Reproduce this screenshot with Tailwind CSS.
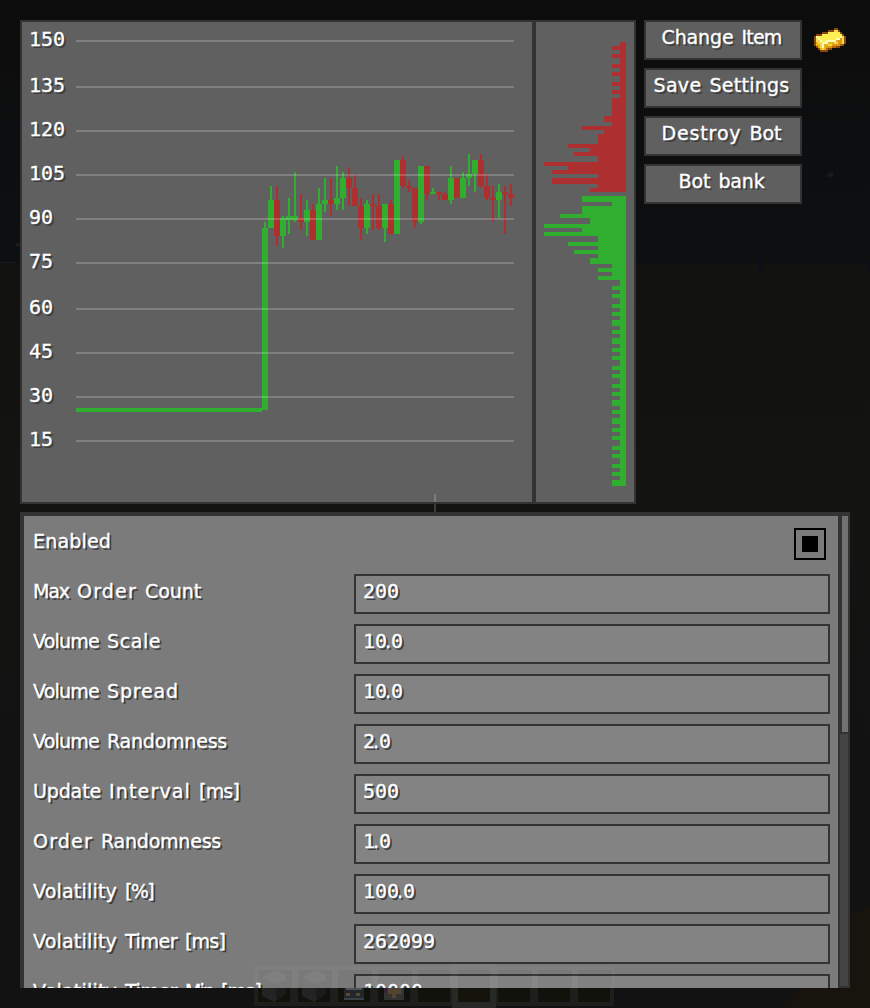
<!DOCTYPE html>
<html lang="en">
<head>
<meta charset="utf-8">
<title>Bot Settings</title>
<script src="https://cdn.jsdelivr.net/npm/@tailwindcss/browser@4"></script>
</head>
<body class="bg-[#111210]">
<div class="relative isolate w-[870px] h-[1008px] overflow-hidden bg-[linear-gradient(#0c0c0c_0px,#0d0e0f_130px,#0e0f11_262px,#121310_266px,#131412_520px,#111211_1008px)] text-white text-[19px] leading-6 font-['DejaVu_Sans',sans-serif] [text-shadow:2px_2px_0_#3e3e3e] [-webkit-text-stroke:0.3px_white]">

  <!-- world and hotbar behind the screen -->
  <svg class="absolute inset-0 -z-10" width="870" height="1008" shape-rendering="crispEdges">
    <path d="M850 914L870 907V1008H780L800 988H850Z" fill="#17130d"/>
    <path d="M828 173h3v-1h2v4h-2v1h-3zM2 262h14v1H2zM16 243h4v3h-4z" fill="#1a1a1c"/>
    <path d="M758 254h6v8h-1v9h-5zM867 260h3v11h-3z" fill="#0e0e17"/>
    <path d="M434 504h2v8h-2z" fill="#3b3b3b"/>
    <g id="hotbar"></g>
  </svg>

  <div class="flex flex-col px-5 pt-5 gap-2">
    <div class="flex gap-2 h-[484px]">
      <!-- price chart and order book -->
      <div class="flex w-[616px] gap-1 bg-[#333] border-2 border-[#333]">
        <div class="relative w-[510px] h-[480px] bg-[#606060]">
          <div id="axis"></div>
          <svg id="price" class="absolute inset-0" width="510" height="480" viewBox="22 22 510 480" shape-rendering="crispEdges"></svg>
        </div>
        <div class="w-[98px] h-[480px] bg-[#606060]">
          <svg id="book" width="98" height="480" viewBox="536 22 98 480" shape-rendering="crispEdges"></svg>
        </div>
      </div>
      <div class="flex flex-col gap-2 w-[158px]">
        <button class="h-10 pb-1.5 pr-[3px] border-2 border-[#333] bg-[#5f5f5f] whitespace-nowrap [text-shadow:2px_2px_0_#3e3e3e]"><span class="mc">Change Item</span></button>
        <button class="h-10 pb-1.5 pr-[3px] border-2 border-[#333] bg-[#5f5f5f] whitespace-nowrap [text-shadow:2px_2px_0_#3e3e3e]"><span class="mc">Save Settings</span></button>
        <button class="h-10 pb-1.5 pr-[3px] border-2 border-[#333] bg-[#5f605f] whitespace-nowrap [text-shadow:2px_2px_0_#3e3e3e]"><span class="mc">Destroy Bot</span></button>
        <button class="h-10 pb-1.5 pr-[3px] border-2 border-[#333] bg-[#5f5f5f] whitespace-nowrap [text-shadow:2px_2px_0_#3e3e3e]"><span class="mc">Bot bank</span></button>
      </div>
      <svg id="ingot" class="mt-2 ml-1" width="32" height="24" viewBox="0 0 16 12" shape-rendering="crispEdges"></svg>
    </div>

    <!-- settings list -->
    <div class="flex w-[830px] h-[476px] bg-[#333] pt-1 pl-1">
      <div class="w-[814px] h-[472px] overflow-hidden bg-[#7b7b7b] pr-2 pl-[9px]">
        <div class="flex justify-between h-[58px] pt-3 pr-1">
          <span class="mc pt-[1px]">Enabled</span>
          <span class="grid place-items-center size-8 border-2 border-black"><span class="size-4 bg-black"></span></span>
        </div>
        <div id="rows" class="flex flex-col gap-[10px]"></div>
      </div>
      <div class="w-3 pl-[2px] pr-[2px] pb-[2px]">
        <div class="h-[470px] bg-[#444]">
          <div class="h-[218px] bg-[#333] pl-[2px] pb-[2px]"><div class="h-[216px] bg-[#727272]"></div></div>
        </div>
      </div>
    </div>
  </div>

  <!-- hotbar showing faintly through the panel -->
  <svg class="absolute left-0 top-0 opacity-[0.03]" width="870" height="988" shape-rendering="crispEdges">
    <path d="M254 966H452V964H496V966H614V988H254Z" fill="#fff"/>
    <path d="M258 970h34v18h-34zM298 970h34v18h-34zM338 970h34v18h-34zM378 970h34v18h-34zM418 970h32v18h-32zM458 970h32v18h-32zM498 970h34v18h-34zM538 970h34v18h-34zM578 970h34v18h-34z" fill="#555"/>
    <path d="M262 978l12-8 12 5v5l-12 4zM302 978l12-8 12 5v5l-12 4z" fill="#fff"/>
  </svg>
  <svg class="absolute left-[434px] top-[494px]" width="2" height="8"><path d="M0 0h2v8h-2z" fill="#7c7c7c"/></svg>
</div>

<script>
const R = '#ae2f2f', G = '#30ae30';
const rect = (x, y, w, h, f) => `<rect x="${x}" y="${y}" width="${w}" height="${h}" fill="${f}"/>`;

// price axis: label and grid line y
const ticks = [[150,40],[135,86],[120,130],[105,174],[90,218],[75,262],[60,308],[45,352],[30,396],[15,440]];
document.getElementById('axis').innerHTML = ticks.map(([v, y]) =>
  `<span class="absolute left-[7px] font-['DejaVu_Sans_Mono',monospace] text-[20px] tracking-[-0.04px]" style="top:${y - 35}px">${v}</span>`).join('');

// candles: colour, body top, body bottom, wick top, wick bottom (thirds of a pixel from y=140)
const candles = [
 ['g',264,810,246,810],['g',180,264,138,264],['r',180,288,138,318],['g',234,288,228,324],['g',228,240,174,282],['g',228,240,96,246],
 ['r',234,246,162,270],['g',210,246,180,288],['r',210,300,192,300],['g',192,300,144,300],['g',180,192,114,216],['r',180,192,114,228],
 ['g',174,192,78,210],['g',114,174,96,210],['r',114,144,84,198],['r',144,198,102,198],['r',198,264,174,300],['g',192,264,180,282],
 ['r',192,198,162,270],['r',198,264,162,270],['g',192,264,192,306],['r',192,282,180,282],['g',60,282,60,282],['r',60,138,48,144],
 ['r',138,144,120,156],['r',144,246,144,264],['g',78,246,78,252],['r',78,162,78,180],['g',156,162,144,162],['r',156,162,156,180],
 ['r',162,180,156,180],['g',114,180,78,192],['r',114,174,114,174],['g',114,174,96,174],['g',102,114,42,138],['g',60,102,60,156],
 ['r',60,138,42,144],['r',138,174,102,180],['r',174,180,138,246],['g',156,180,132,234],['r',156,162,138,282],['r',162,174,132,198]];
let p = rect(76, 408, 186, 4, G);
candles.forEach(([c, bt, bb, wt, wb], i) => {
  const x = 262 + 6 * i, f = c === 'g' ? G : R;
  p += rect(x, 140 + bt / 3, 6, (bb - bt) / 3, f) + rect(x + 2, 140 + wt / 3, 2, (wb - wt) / 3, f);
});
ticks.forEach(([, y]) => p += rect(76, y, 438, 2, 'rgba(255,255,255,0.2)'));
document.getElementById('price').innerHTML = p;

// order book: bar left edge, bottom edge (thirds of a pixel), each bar starts where the previous ended
const asks = [[270,93],[246,105],[270,117],[246,129],[270,147],[246,159],[270,171],[246,183],[270,201],[246,213],[270,225],[246,237],[270,249],[246,303],[222,321],[246,333],[156,345],[222,357],[204,387],[114,399],[180,411],[132,423],[204,441],[42,453],[114,465],[66,477],[204,489],[66,507],[204,519],[180,531]];
const bids = [[156,561],[246,573],[156,597],[90,609],[180,627],[42,639],[156,651],[42,663],[204,681],[114,693],[204,705],[132,717],[204,729],[180,747],[246,759],[204,771],[246,783],[204,795],[270,813]];
const steps = [[93,105],[117,129],[147,159],[171,183],[195,213],[225,237],[249,267],[279,291],[303,315],[333,345],[357,369],[387,399],[411,423],[435,453],[465,477],[489,507],[519,531],[543,555],[573,585],[597,609],[627,639],[651,663],[675,693]];
steps.forEach(([a, b]) => bids.push([270, a + 720], [246, b + 720]));
let b = '';
for (const [list, start, f] of [[asks, 81, R], [bids, 543, G]]) {
  let y = start;
  for (const [l, e] of list) { b += rect(530 + l / 3, 15 + y / 3, (288 - l) / 3, (e - y) / 3, f); y = e; }
  b += rect(620, 15 + start / 3, 6, (y - start) / 3, f);
}
document.getElementById('book').innerHTML = b;

// gold ingot sprite
const pal = { b:'#8a480c', o:'#b8640d', d:'#dc9613', y:'#fad64a', Y:'#fdf055', w:'#fffbb0', D:'#e9b115' };
const sprite = [
 '..........bb....',
 '.......bbbyyb...',
 '....bbbYYYYYYb..',
 '.bbbYYYYYYYYYYb.',
 'bwYYYYYYYYYYYwyb',
 'bywYYYYYYYYwwdyb',
 'byywYYwwwwwDddyb',
 'bDyywwwDDDyyddyb',
 'bDDywDDyyddddob.',
 '.bDywDdddoobb...',
 '..bDyDobb.......',
 '...bbbb.........'];
document.getElementById('ingot').innerHTML = sprite.map((r, y) => [...r].map((c, x) => pal[c] ? rect(x, y, 1, 1, pal[c]) : '').join('')).join('');

// hotbar slots
let h = rect(254, 966, 360, 40, '#1e1f1d');
for (let i = 0; i < 9; i++) h += rect(258 + 40 * i, 970, 32, 32, '#12120d');
h += rect(452, 964, 44, 44, '#262925') + rect(458, 970, 32, 32, '#14140d');
for (const x of [262, 302]) h += `<path d="M${x} 986h24v8l-12 8-12-6z" fill="#232323"/><path d="M${x + 14} 986h10v8l-10 6z" fill="#1b1b1b"/>`;
h += rect(344, 986, 20, 14, '#20262b') + rect(346, 988, 16, 2, '#505355') + rect(344, 998, 20, 2, '#3a4048') + rect(346, 993, 4, 3, '#57492d') + rect(356, 993, 4, 3, '#57492d');
h += rect(384, 988, 20, 12, '#323230') + rect(388, 988, 14, 6, '#51452f') + rect(392, 994, 4, 4, '#51452f') + rect(384, 986, 3, 7, '#38203c') + rect(401, 986, 3, 7, '#203c48');
document.getElementById('hotbar').innerHTML = h;

// setting rows
const rows = [['Max Order Count','200'],['Volume Scale','10.0'],['Volume Spread','10.0'],['Volume Randomness','2.0'],['Update Interval [ms]','500'],['Order Randomness','1.0'],['Volatility [%]','100.0'],['Volatility Timer [ms]','262099'],['Volatility Timer Min [ms]','10000']];
document.getElementById('rows').innerHTML = rows.map(([k, v]) =>
  `<div class="flex h-10 shrink-0"><span class="mc w-[321px] pt-[5px] whitespace-nowrap">${k}</span><span class="flex-1 border-2 border-[#333] bg-[#838383] pl-[7px] pt-[3px] text-[20px] font-['DejaVu_Sans_Mono',monospace]"><span class="mc" data-mono>${v}</span></span></div>`).join('');

// pixel-font advances: letter spacing is set per word so each word keeps its nominal width
const adv = { ' ':8, i:4, l:6, t:8, I:8, '[':8, ']':8, k:10, f:10, '.':4 };
const cx = document.createElement('canvas').getContext('2d');
document.querySelectorAll('.mc').forEach(el => {
  el.innerHTML = el.textContent.split(/( |\.)/).filter(Boolean).map(w => {
    cx.font = 'mono' in el.dataset && w !== '.' ? '20px "DejaVu Sans Mono"' : '19px "DejaVu Sans"';
    const want = [...w].reduce((n, c) => n + (adv[c] || 12), 0);
    const dot = w === '.' ? `class="text-[19px] leading-none font-['DejaVu_Sans',sans-serif] relative -left-[2px]" ` : '';
    return `<span ${dot}style="letter-spacing:${((want - cx.measureText(w).width) / w.length).toFixed(3)}px">${w}</span>`;
  }).join('');
});
</script>
</body>
</html>
